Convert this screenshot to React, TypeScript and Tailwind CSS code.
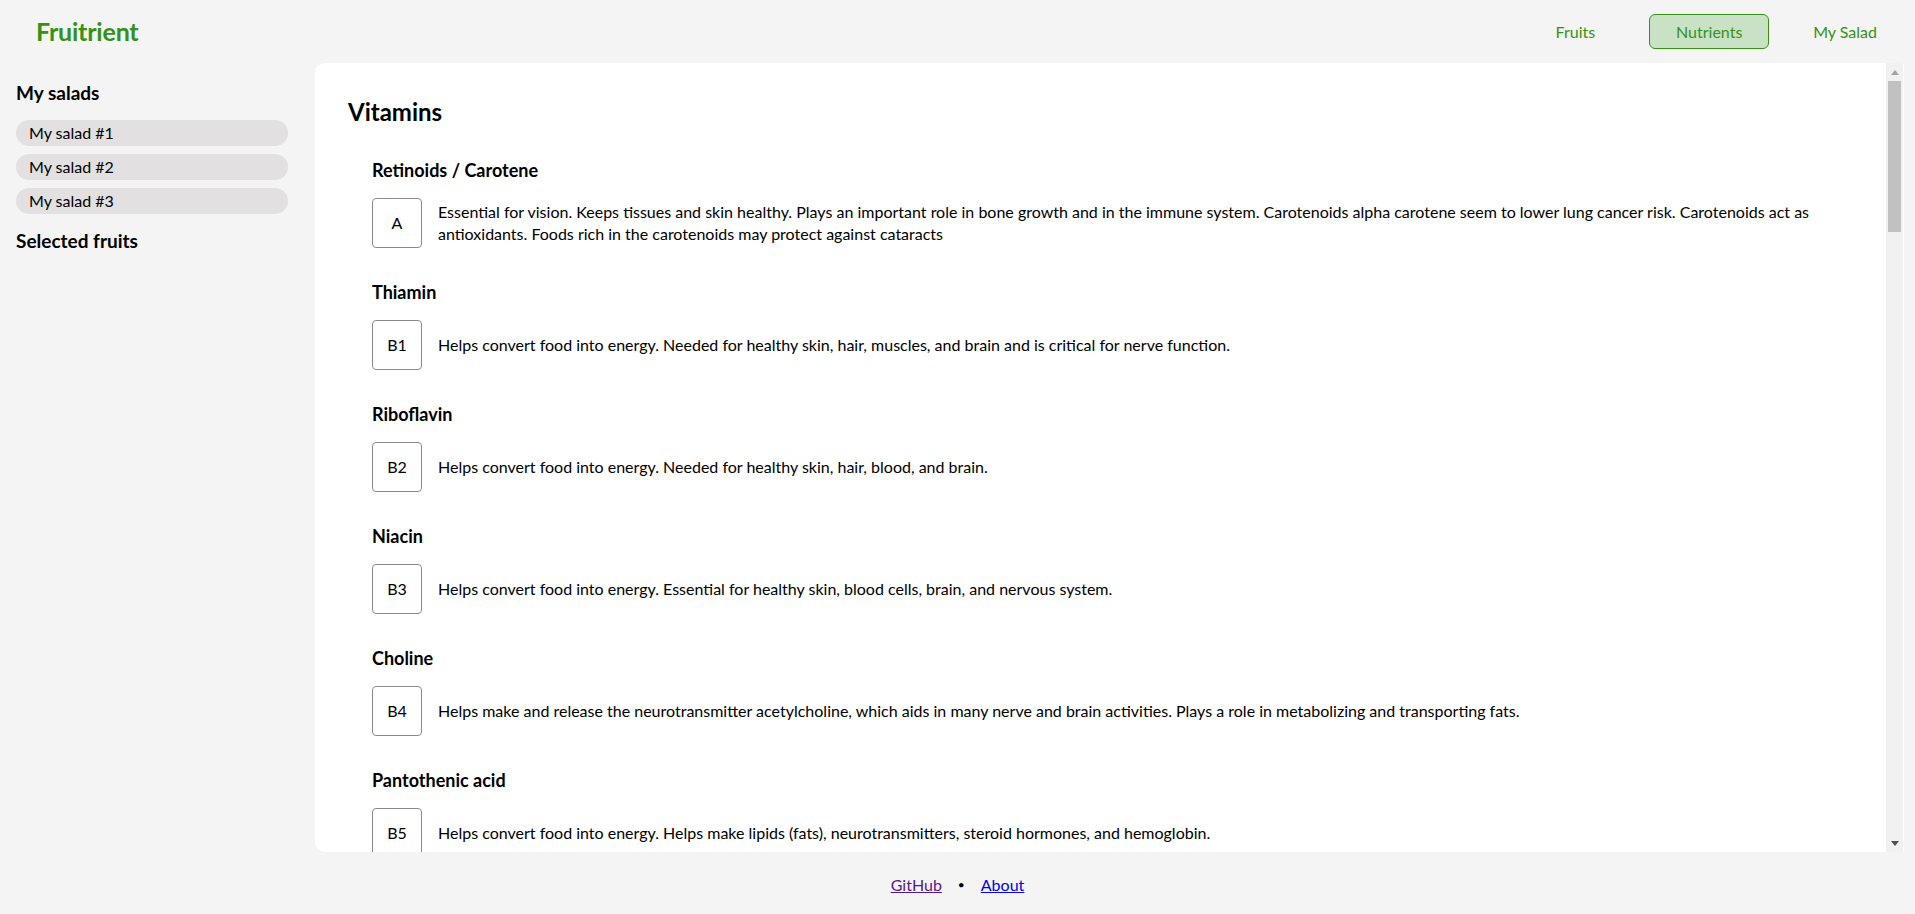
import React from 'react';

const vitamins = [
  {
    name: 'Retinoids / Carotene',
    code: 'A',
    text: 'Essential for vision. Keeps tissues and skin healthy. Plays an important role in bone growth and in the immune system. Carotenoids alpha carotene seem to lower lung cancer risk. Carotenoids act as antioxidants. Foods rich in the carotenoids may protect against cataracts',
  },
  {
    name: 'Thiamin',
    code: 'B1',
    text: 'Helps convert food into energy. Needed for healthy skin, hair, muscles, and brain and is critical for nerve function.',
  },
  {
    name: 'Riboflavin',
    code: 'B2',
    text: 'Helps convert food into energy. Needed for healthy skin, hair, blood, and brain.',
  },
  {
    name: 'Niacin',
    code: 'B3',
    text: 'Helps convert food into energy. Essential for healthy skin, blood cells, brain, and nervous system.',
  },
  {
    name: 'Choline',
    code: 'B4',
    text: 'Helps make and release the neurotransmitter acetylcholine, which aids in many nerve and brain activities. Plays a role in metabolizing and transporting fats.',
  },
  {
    name: 'Pantothenic acid',
    code: 'B5',
    text: 'Helps convert food into energy. Helps make lipids (fats), neurotransmitters, steroid hormones, and hemoglobin.',
  },
  {
    name: 'Pyridoxine',
    code: 'B6',
    text: 'Aids in lowering homocysteine levels and may reduce the risk of heart disease. Helps convert tryptophan to niacin and serotonin.',
  },
  {
    name: 'Biotin',
    code: 'B7',
    text: 'Helps convert food into energy and synthesize glucose. Helps make and break down some fatty acids.',
  },
  {
    name: 'Folic acid',
    code: 'B9',
    text: 'Vital for new cell creation. Helps prevent brain and spine birth defects when taken early in pregnancy.',
  },
  {
    name: 'Cobalamin',
    code: 'B12',
    text: 'Assists in making new cells and breaking down some fatty acids and amino acids. Protects nerve cells and encourages their normal growth.',
  },
];

export default function App() {
  return (
    <div className="h-screen w-full flex flex-col bg-[#f4f4f4] text-black font-['Lato',sans-serif] overflow-hidden">
      {/* Header */}
      <header className="h-[63px] shrink-0 flex items-center justify-between pl-[36px] pr-[38px]">
        <div className="text-[25px] font-bold text-[#359214] tracking-[-0.2px]">Fruitrient</div>
        <nav className="flex items-center text-[16px] text-[#359214]">
          <span className="mr-[54px]">Fruits</span>
          <span className="w-[120px] h-[35px] flex items-center justify-center rounded-[6px] border border-[#359214] bg-[#c9e2c6]">
            Nutrients
          </span>
          <span className="ml-[44px]">My Salad</span>
        </nav>
      </header>

      {/* Body */}
      <div className="flex-1 min-h-0 flex">
        <aside className="w-[315px] shrink-0 pl-[16px] pr-[27px] pt-[16px]">
          <h2 className="text-[19px] font-bold mb-[12px]">My salads</h2>
          <div className="flex flex-col gap-[8px]">
            <div className="h-[26px] rounded-full bg-[#e2e0e1] pl-[13px] flex items-center text-[16px]">My salad #1</div>
            <div className="h-[26px] rounded-full bg-[#e2e0e1] pl-[13px] flex items-center text-[16px]">My salad #2</div>
            <div className="h-[26px] rounded-full bg-[#e2e0e1] pl-[13px] flex items-center text-[16px]">My salad #3</div>
          </div>
          <h2 className="text-[19px] font-bold mt-[13px]">Selected fruits</h2>
        </aside>

        <div className="flex-1 min-w-0 mr-[11px] bg-white rounded-l-[10px] rounded-r-[2px] overflow-hidden flex">
          <main className="flex-1 min-w-0 overflow-hidden pl-[33px] pr-[23px] pt-[34px]">
            <h1 className="text-[24px] font-bold leading-[30px] mb-[32px]">Vitamins</h1>
            <div className="pl-[24px] flex flex-col gap-[33px] pb-[34px]">
              {vitamins.map((v) => (
                <section key={v.code}>
                  <h3 className="text-[18px] font-bold leading-[22px] mb-[17px]">{v.name}</h3>
                  <div className="flex items-center gap-[16px]">
                    <div className="w-[50px] h-[50px] shrink-0 rounded-[4px] border border-[#8a8a8a] flex items-center justify-center text-[16px]">
                      {v.code}
                    </div>
                    <p className="text-[16px] leading-[22px]">{v.text}</p>
                  </div>
                </section>
              ))}
            </div>
          </main>

          {/* scrollbar */}
          <div className="w-[17px] shrink-0 bg-[#f1f1f1] flex flex-col mr-[1px]">
            <div className="h-[18px] flex items-center justify-center">
              <svg width="8" height="5" viewBox="0 0 8 5"><path d="M4 0 L8 5 L0 5 Z" fill="#a3a3a3" /></svg>
            </div>
            <div className="h-[151px] mx-[2px] bg-[#c1c1c1]" />
            <div className="flex-1" />
            <div className="h-[18px] flex items-center justify-center">
              <svg width="8" height="5" viewBox="0 0 8 5"><path d="M0 0 L8 0 L4 5 Z" fill="#505050" /></svg>
            </div>
          </div>
        </div>
      </div>

      {/* Footer */}
      <footer className="h-[62px] shrink-0 flex items-center justify-center gap-[16px] text-[16px] pt-[3px]">
        <a href="#" className="underline text-[#551a8b]">GitHub</a>
        <span className="text-[12px]">•</span>
        <a href="#" className="underline text-[#0000ee]">About</a>
      </footer>
    </div>
  );
}
